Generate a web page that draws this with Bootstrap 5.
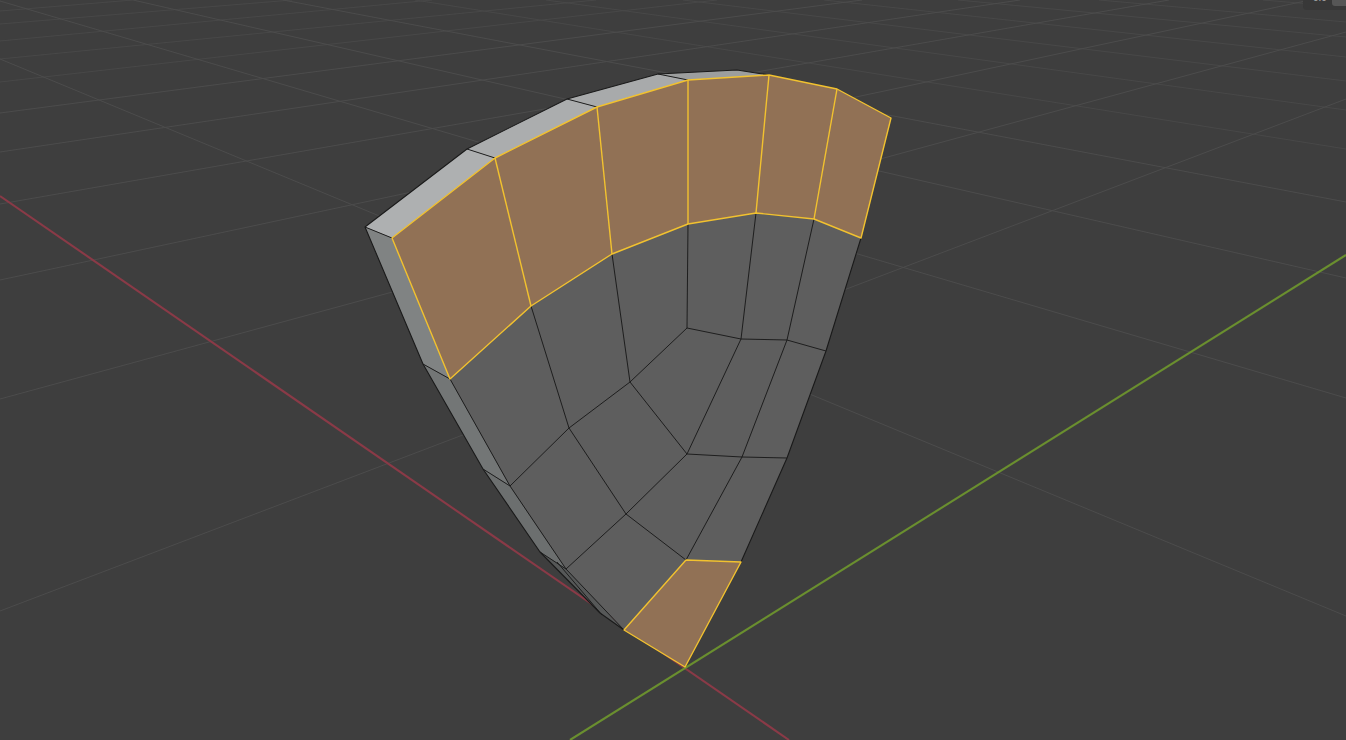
<!DOCTYPE html>
<html lang="en">
<head>
<meta charset="utf-8">
<title>3D viewport</title>
<link href="https://cdn.jsdelivr.net/npm/bootstrap@5.3.0/dist/css/bootstrap.min.css" rel="stylesheet">
<style>
body{background:#3e3e3e;}
.viewport-area{width:1346px;height:740px;background:#3e3e3e;}
.gl{stroke:#4c4c4c;stroke-width:1;fill:none;}
.gl-far{stroke:#484848;stroke-width:1;fill:none;}
.ax-red{stroke:#8a3a47;stroke-width:2.1;}
.ax-green{stroke:#6a8f2f;stroke-width:2.1;}
.f-front{fill:#5e5e5e;}
.f-sel{fill:#917155;}
.e-dark{stroke:#1a1a1a;stroke-width:.95;fill:none;stroke-linejoin:round;}
.e-out{stroke:#1a1a1a;stroke-width:1.1;fill:none;stroke-linejoin:round;}
.e-sel{stroke:#f2c22f;stroke-width:1.4;fill:none;stroke-linejoin:round;}
.overlay-panel{background:#383838;height:10px;width:43px;border-bottom-left-radius:4px;font:10px/1 "Liberation Sans",sans-serif;color:#a8a8a8;}
.overlay-text{margin-top:-7px;margin-left:10px;width:19px;}
.overlay-btn{background:#565656;width:14px;height:6px;border-bottom-left-radius:3px;font:10px/1 "Liberation Sans",sans-serif;color:#d0d0d0;}
.overlay-btn span{display:block;margin-top:-7px;}
</style>
</head>
<body class="m-0 overflow-hidden">
<main class="viewport-area position-relative overflow-hidden">
<svg class="d-block" width="1346" height="740" viewBox="0 0 1346 740" role="img" aria-label="Curved mesh in a 3D viewport with two selected face groups">
  <g class="gl-far">
    <line x1="0" y1="11" x2="133" y2="0"/>
    <line x1="0" y1="24" x2="292" y2="0"/>
    <line x1="0" y1="41" x2="432" y2="0"/>
    <line x1="0" y1="59" x2="596" y2="0"/>
    <line x1="0" y1="82" x2="717" y2="0"/>
    <line x1="958" y1="0" x2="1346" y2="37"/>
    <line x1="1099" y1="0" x2="1346" y2="22"/>
    <line x1="1263" y1="0" x2="1346" y2="7"/>
    <line x1="824" y1="0" x2="1346" y2="57"/>
    <line x1="683" y1="0" x2="1346" y2="81"/>
    <line x1="546" y1="0" x2="1346" y2="110"/>
    <line x1="415" y1="0" x2="1346" y2="149"/>
  </g>
  <g class="gl">
    <line x1="0" y1="113" x2="862" y2="0"/>
    <line x1="0" y1="152" x2="1020" y2="0"/>
    <line x1="0" y1="204" x2="1169" y2="0"/>
    <line x1="0" y1="280" x2="1310" y2="0"/>
    <line x1="0" y1="399" x2="1346" y2="32"/>
    <line x1="0" y1="611" x2="1346" y2="99"/>
    <line x1="283" y1="0" x2="1346" y2="202"/>
    <line x1="133" y1="0" x2="1346" y2="278"/>
    <line x1="0" y1="1" x2="1346" y2="398"/>
    <line x1="0" y1="59" x2="1346" y2="616"/>
  </g>
  <line class="ax-red" x1="0" y1="196" x2="789" y2="740"/>
  <line class="ax-green" x1="570" y1="740" x2="1346" y2="255"/>

  <polygon fill="#aeb0b1" points="365,227 467,149 495,158 392,238"/>
  <polygon fill="#abadae" points="467,149 567,99 597,107 495,158"/>
  <polygon fill="#a8aaab" points="567,99 658,74 688,80 597,107"/>
  <polygon fill="#9c9e9e" points="658,74 737,70 769,75 688,80"/>
  <polygon fill="#808383" points="365,227 392,238 450,379 423,364"/>
  <polygon fill="#737676" points="423,364 450,379 510,486 483,469"/>
  <polygon fill="#6c6f6f" points="483,469 510,486 566,569 540,552"/>
  <polygon fill="#565858" points="540,552 566,569 624,630 600,613"/>
  <polygon class="f-front" points="450,379 531,306 612,254 688,224 756,213 814,219 861,238 826,351 787,458 741,562 686,560 624,630 566,569 510,486"/>

  <g class="e-dark">
    <path d="M510,486 569,428 630,382 687,328 741,339 787,340 826,351"/>
    <path d="M566,569 626,514 687,454 742,457 787,458"/>
    <path d="M531,306 569,428 626,514 686,560"/>
    <path d="M612,254 630,382 687,454"/>
    <path d="M688,224 687,328"/>
    <path d="M756,213 741,339 687,454"/>
    <path d="M814,219 787,340 742,457 686,560"/>
    <path d="M450,379 510,486 566,569 624,630"/>
    <path d="M365,227 392,238"/>
    <path d="M467,149 495,158"/>
    <path d="M567,99 597,107"/>
    <path d="M658,74 688,80"/>
    <path d="M423,364 450,379"/>
    <path d="M483,469 510,486"/>
    <path d="M540,552 566,569"/>
    <path d="M557,562 602,615"/>
  </g>
  <path class="e-out" d="M769,75 737,70 658,74 567,99 467,149 365,227 423,364 483,469 540,552 600,613 624,630"/>
  <path class="e-out" d="M861,238 826,351 787,458 741,562"/>

  <g class="f-sel">
    <polygon points="392,238 495,158 597,107 688,80 769,75 837,89 891,118 861,238 814,219 756,213 688,224 612,254 531,306 450,379"/>
    <polygon points="624,630 686,560 741,562 685,667"/>
  </g>
  <g class="e-sel">
    <polygon points="392,238 495,158 597,107 688,80 769,75 837,89 891,118 861,238 814,219 756,213 688,224 612,254 531,306 450,379"/>
    <path d="M495,158 531,306"/>
    <path d="M597,107 612,254"/>
    <path d="M688,80 688,224"/>
    <path d="M769,75 756,213"/>
    <path d="M837,89 814,219"/>
    <polygon points="624,630 686,560 741,562 685,667"/>
  </g>
</svg>
<aside class="overlay-panel position-absolute top-0 end-0 d-flex justify-content-between overflow-hidden">
  <div class="overlay-text text-nowrap">0:0</div>
  <div class="overlay-btn text-center overflow-hidden"><span>··</span></div>
</aside>
</main>
<script src="https://cdn.jsdelivr.net/npm/bootstrap@5.3.0/dist/js/bootstrap.bundle.min.js"></script>
</body>
</html>
